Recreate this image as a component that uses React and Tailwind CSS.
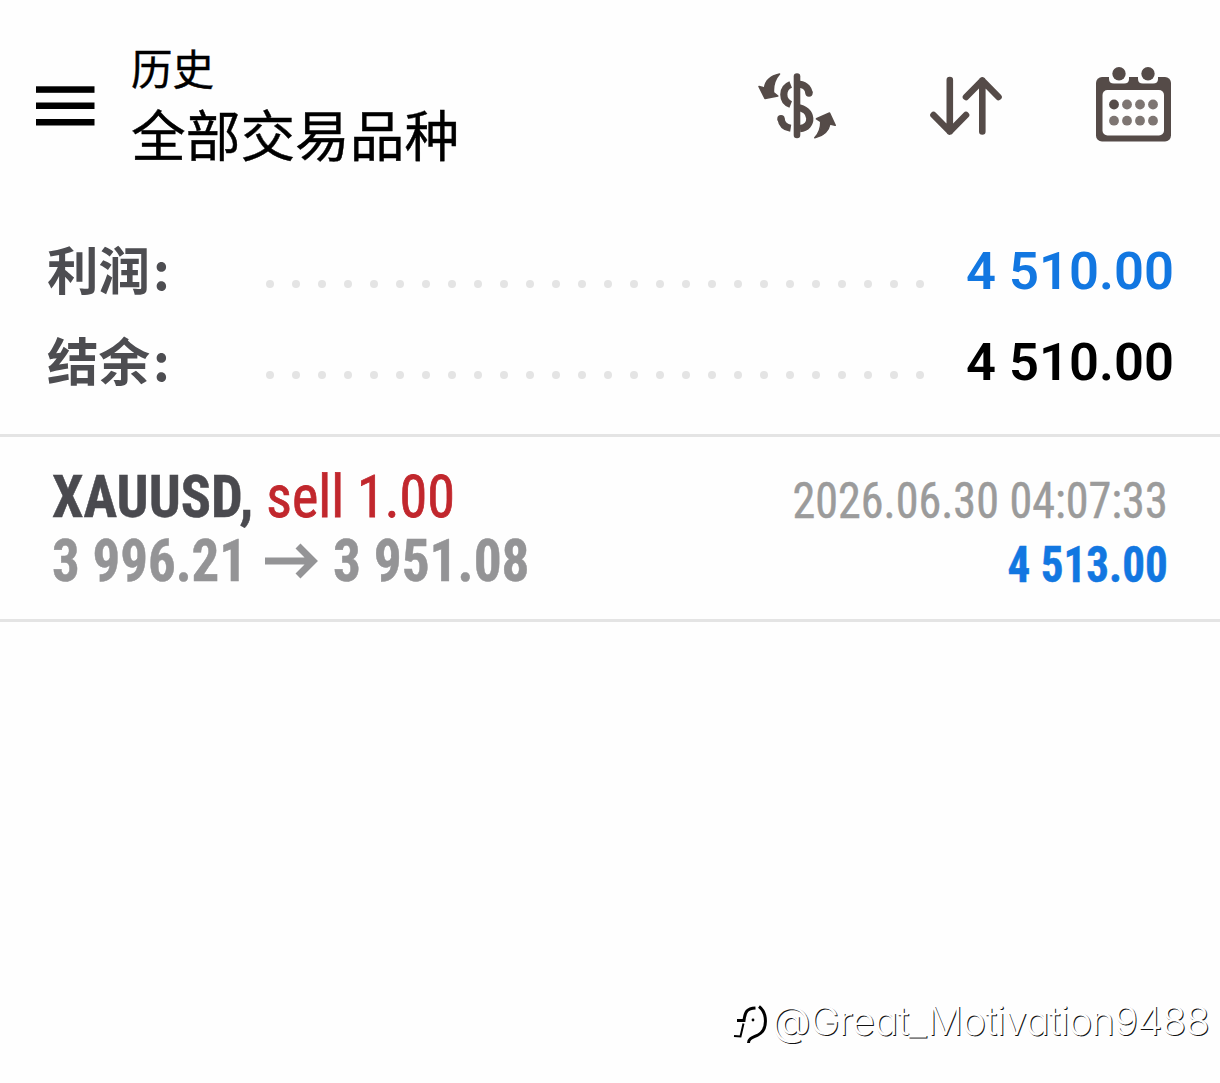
const SUMMARY = [
  { label: "利润", value: "4 510.00", color: "text-[#1277e1]" },
  { label: "结余", value: "4 510.00", color: "text-black" },
];

const DEALS = [
  {
    symbol: "XAUUSD",
    side: "sell 1.00",
    open: "3 996.21",
    close: "3 951.08",
    time: "2026.06.30 04:07:33",
    profit: "4 513.00",
  },
];

function MenuIcon() {
  return (
    <svg width="60" height="42" viewBox="0 0 60 42" fill="#000">
      <rect x="1" y="1.300" width="58.500" height="6.500" />
      <rect x="1" y="17.500" width="58.500" height="6.500" />
      <rect x="1" y="34" width="58.500" height="6.500" />
    </svg>
  );
}

function CurrencyIcon() {
  return (
    <svg width="80" height="68" viewBox="0 0 80 68" fill="none">
      <path d="M39 4.600V63" stroke="#554b48" strokeWidth="6.600" strokeLinecap="round" />
      <path
        d="M32.700 12.500C23.500 16 23.500 29 32.700 32.500M23 46.700C23.800 52.500 27.500 55.500 32.700 56.300M39 12C46 12 50.500 15.500 51 21.300M39 35.500C55.500 37 55.500 55.500 42 56.600"
        stroke="#554b48"
        strokeWidth="7.200"
      />
      <circle cx="23" cy="46.700" r="3.700" fill="#554b48" />
      <circle cx="51" cy="21" r="3.700" fill="#554b48" />
      <path
        d="M21.500 2C12 4 7.500 8.500 6.500 16L1 14.500L7 26.500L19.800 24L15.500 20.500C15 13 17 7 21.500 2Z"
        fill="#554b48"
        stroke="#554b48"
        strokeWidth="1.600"
        strokeLinejoin="round"
      />
      <path
        d="M56.800 65.700C66 63.500 70.500 59.500 71.800 52L77.200 53.300L71.500 41L58.500 46.800L62.800 49.500C63 56 61.500 61 56.800 65.700Z"
        fill="#554b48"
        stroke="#554b48"
        strokeWidth="1.600"
        strokeLinejoin="round"
      />
    </svg>
  );
}

function SortIcon() {
  return (
    <svg
      width="74"
      height="62"
      viewBox="0 0 74 62"
      fill="none"
      stroke="#554b48"
      strokeWidth="6.6"
      strokeLinecap="round"
      strokeLinejoin="round"
    >
      <path d="M20.800 5V56.500M4.500 40L20.800 56.500L37 40" />
      <path d="M53.300 56.500V5.500M37 22L53.300 5.500L69.500 22" />
    </svg>
  );
}

function CalendarIcon() {
  return (
    <svg width="76" height="76" viewBox="0 0 76 76">
      <rect x="0" y="10" width="75" height="64.500" rx="6" fill="#554b48" />
      <rect x="6.500" y="23" width="61.500" height="45.500" rx="5" fill="#fefefe" />
      {[23, 52].map((x) => (
        <g key={x}>
          <path d={`M${x - 10} 9H${x + 10}V12Q${x + 10} 16.500 ${x + 5} 16.500H${x - 5}Q${x - 10} 16.500 ${x - 10} 12Z`} fill="#fefefe" />
          <circle cx={x} cy="6.800" r="6.700" fill="#554b48" />
        </g>
      ))}
      {[18, 31, 44, 57].map((x, i) => (
        <g key={x} fill="#7d7572">
          <circle cx={x} cy="37.500" r="4.900" fill={i === 0 ? "#554b48" : "#7d7572"} />
          <circle cx={x} cy="53.700" r="4.900" />
        </g>
      ))}
    </svg>
  );
}

function PriceArrow() {
  return (
    <svg width="53" height="38" viewBox="0 0 53 38" fill="none" stroke="#949496" strokeWidth="7">
      <path d="M0 19H47M33 4L48 19L33 34" />
    </svg>
  );
}

function Dots() {
  return (
    <div className="flex w-[658px] justify-between">
      {Array.from({ length: 26 }, (_, i) => (
        <span key={i} className="size-2 rounded-full bg-[#e4e4e4]" />
      ))}
    </div>
  );
}

function WatermarkLogo() {
  return (
    <svg width="36" height="44" viewBox="0 0 36 44" fill="none" stroke="#000">
      <path d="M4 18.500H11C12 9.500 14 6.500 22.500 6" strokeWidth="3" />
      <path d="M10.500 21.500L7.500 34.500L1 34" strokeWidth="2" />
      <path d="M26 4.500C34.500 11 35 28 25 33C20 35.500 15.500 36 15.500 41" strokeWidth="3" />
      <circle cx="20" cy="18" r="1.400" fill="#000" stroke="none" />
    </svg>
  );
}

export default function App() {
  return (
    <div className="flex h-[1083px] w-[1220px] flex-col overflow-hidden bg-[#fefefe] font-[Roboto,'Noto_Sans_CJK_SC',sans-serif]">
      {/* Header */}
      <header className="flex h-[220px] items-start pl-[35px] pr-[48px]">
        <div className="mt-[85px]">
          <MenuIcon />
        </div>
        <div className="ml-[36px] mt-[40px] flex flex-col text-black [-webkit-text-stroke:0.4px_#000]">
          <span className="text-[41.5px] leading-[61px]">历史</span>
          <h1 className="text-[54.7px] leading-[72px]">全部交易品种</h1>
        </div>
        <div className="ml-auto flex items-start">
          <div className="mt-[72px]">
            <CurrencyIcon />
          </div>
          <div className="ml-[91px] mt-[75px]">
            <SortIcon />
          </div>
          <div className="ml-[93px] mt-[67px]">
            <CalendarIcon />
          </div>
        </div>
      </header>

      {/* Totals */}
      <section className="h-[214px] pl-[47px] pr-[46px]">
        {SUMMARY.map((row) => (
          <div key={row.label} className="flex h-[91px] items-center">
            <div className="mt-[3px] flex w-[219px] font-['Noto_Sans_CJK_SC',sans-serif] text-[51.5px] font-bold leading-[91px] text-[#4d4d51]">
              <span>{row.label}</span>
              <span className="ml-[3px]">:</span>
            </div>
            <div className="mt-[36px]">
              <Dots />
            </div>
            <span className={`ml-auto mt-3 text-[52.5px] font-semibold leading-[91px] ${row.color}`}>{row.value}</span>
          </div>
        ))}
      </section>

      {/* Deals */}
      {DEALS.map((deal) => (
        <section
          key={deal.time}
          className="flex h-[188px] justify-between whitespace-nowrap border-y-[3px] border-[#e4e4e4] pl-[52px] pr-[52px] font-['Roboto_Condensed',Roboto,sans-serif] font-stretch-condensed [-webkit-text-stroke:0.5px_currentColor]"
        >
          <div className="mt-[28px] text-[60px] leading-[64px]">
            <div className="origin-left scale-x-[0.937]">
              <span className="font-bold text-[#4a4a4f]">{deal.symbol}, </span>
              <span className="text-[#c1272d] [-webkit-text-stroke:0.8px_#c1272d]">{deal.side}</span>
            </div>
            <div className="flex items-center font-bold text-[#949496] [-webkit-text-stroke:0.5px_#949496]">
              <span className="w-[213px] origin-left scale-x-[0.915]">{deal.open}</span>
              <PriceArrow />
              <span className="ml-[15px] origin-left scale-x-[0.922]">{deal.close}</span>
            </div>
          </div>
          <div className="mt-[32px] text-right text-[49.5px] leading-[64px]">
            <div className="origin-right scale-x-[0.932] text-[#9b9b9b] [-webkit-text-stroke:0.5px_#9b9b9b]">{deal.time}</div>
            <div className="origin-right scale-x-[0.91] font-bold text-[#1277e1] [-webkit-text-stroke:0.5px_#1277e1]">{deal.profit}</div>
          </div>
        </section>
      ))}

      {/* Author tag */}
      <footer className="mb-[34px] mr-[11px] mt-auto flex items-center justify-end">
        <div className="mt-1.5">
          <WatermarkLogo />
        </div>
        <span className="ml-[3px] font-[Inter,sans-serif] text-[40px] font-light leading-[56px] tracking-[-0.8px] text-white [font-feature-settings:'cv11'] [text-shadow:1px_1px_0_#111]">
          @Great_Motivation9488
        </span>
      </footer>
    </div>
  );
}
